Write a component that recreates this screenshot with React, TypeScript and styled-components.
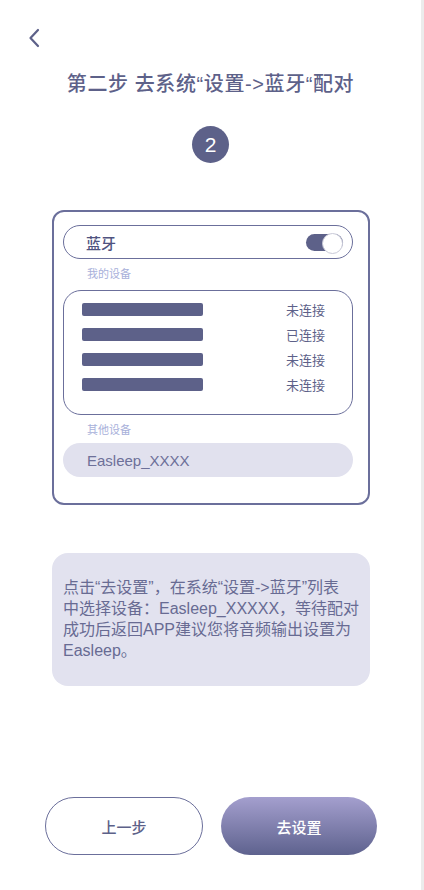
import React from 'react'
import styled, { createGlobalStyle } from 'styled-components'

const GlobalStyle = createGlobalStyle`
  html, body {
    margin: 0;
    padding: 0;
    background: #ececec;
  }
  body {
    font-family: "Liberation Sans", "Noto Sans CJK SC", sans-serif;
    -webkit-font-smoothing: antialiased;
  }
  * {
    box-sizing: border-box;
  }
`

const Page = styled.div`
  width: 421px;
  min-height: 890px;
  background: #fff;
  display: flex;
  flex-direction: column;
  align-items: stretch;
`

const BackButton = styled.button`
  align-self: flex-start;
  margin: 27px 0 0 25px;
  padding: 0;
  width: 18px;
  height: 22px;
  border: none;
  background: transparent;
  color: #5d6189;
  display: flex;
  align-items: center;
  justify-content: center;
  cursor: pointer;
`

const Title = styled.h1`
  margin: 22px 0 0;
  text-align: center;
  font-size: 20px;
  line-height: 26px;
  letter-spacing: 0.6px;
  font-weight: 500;
  color: #5d6189;
`

const StepBadge = styled.div`
  align-self: center;
  margin-top: 29px;
  width: 37px;
  height: 37px;
  border-radius: 50%;
  background: #5d6189;
  color: #fff;
  font-size: 21px;
  line-height: 1;
  display: flex;
  align-items: center;
  justify-content: center;
`

const Card = styled.div`
  margin: 47px 51px 0 52px;
  border: 2.5px solid #6b6f9b;
  border-radius: 12px;
  padding: 13px 15px 26px 9px;
  display: flex;
  flex-direction: column;
`

const SwitchRow = styled.div`
  height: 34px;
  border: 1.5px solid #6b6f9b;
  border-radius: 17px;
  padding: 0 9px 0 22px;
  display: flex;
  align-items: center;
  justify-content: space-between;
`

const SwitchLabel = styled.span`
  font-size: 15px;
  font-weight: 500;
  color: #4f5380;
`

const Toggle = styled.span`
  position: relative;
  width: 37px;
  height: 17px;
  border-radius: 9px;
  background: #5d6189;

  &::after {
    content: "";
    position: absolute;
    right: 0;
    top: -1px;
    width: 19px;
    height: 19px;
    border-radius: 50%;
    background: #fff;
    border: 1px solid #c9cad8;
  }
`

const SectionLabel = styled.div`
  margin: 7px 0 0 24px;
  font-size: 11px;
  line-height: 16px;
  color: #a8b0da;
`

const DeviceBox = styled.div`
  margin-top: 8px;
  height: 125px;
  border: 1.5px solid #6b6f9b;
  border-radius: 18px;
  padding: 6px 27px 0 18px;
  display: flex;
  flex-direction: column;
`

const DeviceRow = styled.div`
  height: 25px;
  display: flex;
  align-items: center;
  justify-content: space-between;
`

const DeviceBar = styled.span`
  width: 121px;
  height: 13px;
  border-radius: 2px;
  background: #5d6189;
`

const DeviceStatus = styled.span`
  font-size: 13px;
  color: #5d6189;
`

const OtherDevice = styled.div`
  margin-top: 5px;
  height: 34px;
  border-radius: 17px;
  background: #e1e1ee;
  padding-left: 24px;
  display: flex;
  align-items: center;
  font-size: 15px;
  color: #6d7099;
`

const InfoBox = styled.p`
  margin: 48px 51px 0 52px;
  padding: 24px 8px 25px 11px;
  border-radius: 16px;
  background: #e2e2ef;
  font-size: 16px;
  line-height: 21px;
  color: #686b93;
  white-space: nowrap;
`

const Footer = styled.div`
  margin-top: auto;
  padding: 0 44px 35px 45px;
  display: flex;
  gap: 18px;
`

const ActionButton = styled.button<{ $primary?: boolean }>`
  flex: 1;
  height: 58px;
  border-radius: 29px;
  font-family: inherit;
  font-size: 15px;
  font-weight: 500;
  cursor: pointer;
  border: ${(p) => (p.$primary ? 'none' : '1.5px solid #6b6f9b')};
  background: ${(p) => (p.$primary ? 'linear-gradient(180deg, #a49fce 0%, #5e628e 100%)' : '#fff')};
  color: ${(p) => (p.$primary ? '#fff' : '#5d6189')};
`

const devices = ['未连接', '已连接', '未连接', '未连接']

const App: React.FunctionComponent = () => {
  return (
    <>
      <GlobalStyle />
      <Page>
        <BackButton aria-label="返回">
          <svg width="12" height="20" viewBox="0 0 12 20" fill="none">
            <path d="M10 2 L2.5 10 L10 18" stroke="currentColor" strokeWidth="2.2" strokeLinecap="round" strokeLinejoin="round" />
          </svg>
        </BackButton>
        <Title>第二步 去系统“设置-&gt;蓝牙“配对</Title>
        <StepBadge>2</StepBadge>
        <Card>
          <SwitchRow>
            <SwitchLabel>蓝牙</SwitchLabel>
            <Toggle />
          </SwitchRow>
          <SectionLabel>我的设备</SectionLabel>
          <DeviceBox>
            {devices.map((status, i) => (
              <DeviceRow key={i}>
                <DeviceBar />
                <DeviceStatus>{status}</DeviceStatus>
              </DeviceRow>
            ))}
          </DeviceBox>
          <SectionLabel>其他设备</SectionLabel>
          <OtherDevice>Easleep_XXXX</OtherDevice>
        </Card>
        <InfoBox>
          点击“去设置”，在系统“设置-&gt;蓝牙”列表<br />
          中选择设备：Easleep_XXXXX，等待配对<br />
          成功后返回APP建议您将音频输出设置为<br />
          Easleep。
        </InfoBox>
        <Footer>
          <ActionButton>上一步</ActionButton>
          <ActionButton $primary>去设置</ActionButton>
        </Footer>
      </Page>
    </>
  )
}

export default App
